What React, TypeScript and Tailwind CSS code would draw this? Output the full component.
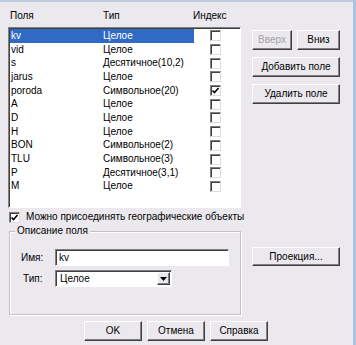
import React from 'react';

const fields: [string, string, boolean][] = [
  ['kv', 'Целое', false],
  ['vid', 'Целое', false],
  ['s', 'Десятичное(10,2)', false],
  ['jarus', 'Целое', false],
  ['poroda', 'Символьное(20)', true],
  ['A', 'Целое', false],
  ['D', 'Целое', false],
  ['H', 'Целое', false],
  ['BON', 'Символьное(2)', false],
  ['TLU', 'Символьное(3)', false],
  ['P', 'Десятичное(3,1)', false],
  ['M', 'Целое', false],
];

function Check({ checked }: { checked?: boolean }) {
  return (
    <span className="flex shrink-0 items-center justify-center w-[11px] h-[11px] bg-white border border-t-[#808080] border-l-[#808080] border-r-[#dcdcdc] border-b-[#dcdcdc] shadow-[inset_1px_1px_0_#404040]">
      {checked && (
        <svg width="9" height="9" viewBox="0 0 9 9">
          <path d="M1.5 4.5 L3.5 6.5 L7.5 2" stroke="#000" strokeWidth="1.6" fill="none" />
        </svg>
      )}
    </span>
  );
}

function Btn({ children, className = '', disabled }: { children: React.ReactNode; className?: string; disabled?: boolean }) {
  return (
    <div
      className={`flex items-center justify-center bg-[#ebe9ed] border border-t-white border-l-white border-r-[#404040] border-b-[#404040] shadow-[inset_-1px_-1px_0_#808080] ${
        disabled ? 'text-[#a3a1a8]' : 'text-black'
      } ${className}`}
    >
      {children}
    </div>
  );
}

export default function App() {
  return (
    <div className="flex w-[356px] h-[345px] bg-[#ebe9ed] text-[10px] leading-[12px] text-black font-['Liberation_Sans',Arial,sans-serif] overflow-hidden">
      <div className="flex flex-col w-[353px]">
        <div className="h-[2px] bg-[#bccde3]" />

        <div className="flex">
          {/* Left: field list and description */}
          <div className="flex flex-col ml-[8px] w-[233px]">
            <div className="flex mt-[8px] h-[12px] pl-[2px]">
              <span className="w-[93px]">Поля</span>
              <span className="w-[90px]">Тип</span>
              <span>Индекс</span>
            </div>

            <div className="mt-[5px] h-[181px] bg-white p-[1px] border border-t-[#808080] border-l-[#808080] border-r-white border-b-white shadow-[inset_1px_1px_0_#404040]">
              {fields.map(([name, type, idx], i) => (
                <div key={name} className="flex items-center h-[13.7px]">
                  <div className={`flex items-center w-[184px] h-full ${i === 0 ? 'bg-[#316ac5] text-white' : ''}`}>
                    <span className="w-[93px] pl-[1px]">{name}</span>
                    <span>{type}</span>
                  </div>
                  <div className="ml-[16px]">
                    <Check checked={idx} />
                  </div>
                </div>
              ))}
            </div>

            <div className="flex items-center mt-[3px] h-[12px] pl-[1px] gap-[6px] whitespace-nowrap">
              <Check checked />
              <span>Можно присоединять географические объекты</span>
            </div>

            <fieldset className="mt-[2px] ml-[1px] h-[90px] border border-[#c3c1c7] shadow-[1px_1px_0_#fff,inset_1px_1px_0_#fff]">
              <legend className="ml-[5px] px-[2px] bg-[#ebe9ed] leading-[12px]">Описание поля</legend>
              <div className="flex items-center mt-[12px] h-[17px]">
                <span className="w-[45px] pl-[11px]">Имя:</span>
                <div className="flex items-center w-[174px] h-[17px] bg-white pl-[3px] border border-t-[#808080] border-l-[#808080] border-r-white border-b-white shadow-[inset_1px_1px_0_#404040]">
                  kv
                </div>
              </div>
              <div className="flex items-center mt-[4px] h-[17px]">
                <span className="w-[45px] pl-[13px]">Тип:</span>
                <div className="flex items-center justify-between w-[117px] h-[17px] bg-white pl-[4px] pr-[1px] border border-t-[#808080] border-l-[#808080] border-r-white border-b-white shadow-[inset_1px_1px_0_#404040]">
                  <span>Целое</span>
                  <Btn className="w-[13px] h-[13px]">
                    <svg width="7" height="4" viewBox="0 0 7 4">
                      <path d="M0 0 H7 L3.5 4 Z" fill="#000" />
                    </svg>
                  </Btn>
                </div>
              </div>
            </fieldset>
          </div>

          {/* Right: action buttons */}
          <div className="flex flex-col ml-[11px] w-[88px]">
            <div className="flex justify-between mt-[28px]">
              <Btn disabled className="w-[40px] h-[20px]">Вверх</Btn>
              <Btn className="w-[43px] h-[20px]">Вниз</Btn>
            </div>
            <Btn className="mt-[7px] h-[20px]">Добавить поле</Btn>
            <Btn className="mt-[7px] h-[20px]">Удалить поле</Btn>
            <Btn className="mt-[143px] h-[19px]">Проекция...</Btn>
          </div>
        </div>

        <div className="flex gap-[5px] pl-[84px] mt-[6px]">
          <Btn className="w-[58px] h-[20px]">OK</Btn>
          <Btn className="w-[58px] h-[20px]">Отмена</Btn>
          <Btn className="w-[58px] h-[20px]">Справка</Btn>
        </div>
      </div>
      <div className="w-[3px] h-full bg-[#a9c3e3]" />
    </div>
  );
}
